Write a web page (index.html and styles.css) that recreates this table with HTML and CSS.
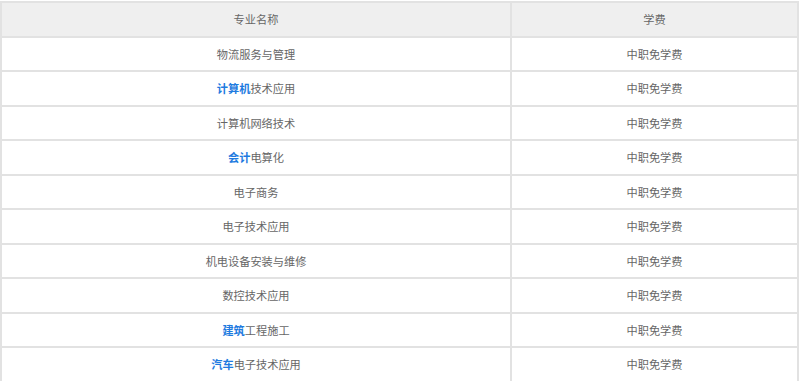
FILE: index.html
```html
<!DOCTYPE html>
<html lang="zh">
<head>
<meta charset="utf-8">
<link rel="stylesheet" href="styles.css">
</head>
<body>
<table class="fees">
  <thead>
    <tr><th class="col-name">专业名称</th><th class="col-fee">学费</th></tr>
  </thead>
  <tbody>
    <tr><td>物流服务与管理</td><td>中职免学费</td></tr>
    <tr><td><a class="kw">计算机</a>技术应用</td><td>中职免学费</td></tr>
    <tr><td>计算机网络技术</td><td>中职免学费</td></tr>
    <tr><td><a class="kw">会计</a>电算化</td><td>中职免学费</td></tr>
    <tr><td>电子商务</td><td>中职免学费</td></tr>
    <tr><td>电子技术应用</td><td>中职免学费</td></tr>
    <tr><td>机电设备安装与维修</td><td>中职免学费</td></tr>
    <tr><td>数控技术应用</td><td>中职免学费</td></tr>
    <tr><td><a class="kw">建筑</a>工程施工</td><td>中职免学费</td></tr>
    <tr><td><a class="kw">汽车</a>电子技术应用</td><td>中职免学费</td></tr>
  </tbody>
</table>
</body>
</html>
```

FILE: styles.css
```css
html, body {
  margin: 0;
  padding: 0;
  background: #ffffff;
}
body {
  padding-top: 1px;
  font-family: "Noto Sans CJK SC", "Noto Sans", sans-serif;
  font-size: 11.2px;
  color: #666666;
}
.fees {
  width: 799px;
  border-collapse: separate;
  border-spacing: 0;
  border-left: 2px solid #e2e2e2;
  border-top: 2px solid #e2e2e2;
  table-layout: fixed;
}
.fees th, .fees td {
  height: 32.5px;
  padding: 0;
  text-align: center;
  vertical-align: middle;
  border-right: 2px solid #e2e2e2;
  border-bottom: 2px solid #e2e2e2;
  font-weight: normal;
  line-height: 16px;
}
.fees th {
  background: #efefef;
  color: #666666;
}
.col-name { width: 508px; }
.col-fee { width: 285px; }
.kw {
  color: #1e7be0;
  font-weight: bold;
  text-decoration: none;
}
```
